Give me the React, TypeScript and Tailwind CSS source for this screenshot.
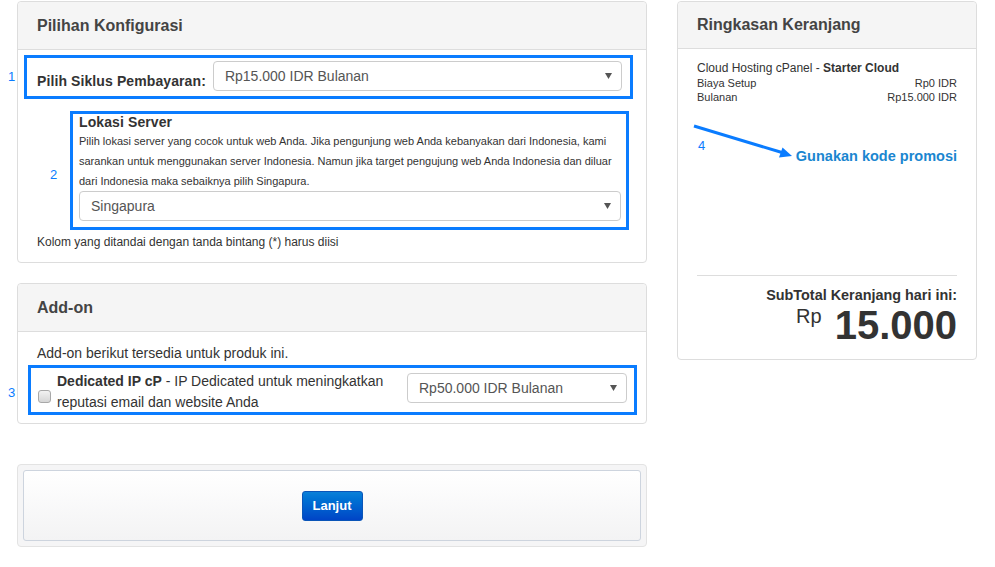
import React from 'react';

const BLUE = 'border-[#0a7cff]';

function FakeSelect({ value, className = '' }: { value: string; className?: string }) {
  return (
    <div
      className={`h-[30px] border border-[#cccccc] rounded-[4px] bg-white pl-[11px] pr-[9px] flex items-center justify-between text-[14px] text-[#555555] ${className}`}
    >
      <span>{value}</span>
      <svg width="7" height="6" viewBox="0 0 7 6">
        <polygon points="0,0 7,0 3.5,6" fill="#555555" />
      </svg>
    </div>
  );
}

function PanelHeader({ title, h = 'h-[48px]' }: { title: string; h?: string }) {
  return (
    <div className={`${h} bg-[#f5f5f5] border-b border-[#dddddd] rounded-t-[4px] px-[19px] flex items-center`}>
      <h3 className="text-[16px] font-bold text-[#444444]">{title}</h3>
    </div>
  );
}

export default function App() {
  return (
    <div
      className="relative w-[995px] h-[567px] overflow-hidden bg-white text-[#333333]"
      style={{ fontFamily: '"Liberation Sans", Arial, sans-serif' }}
    >
      <div className="flex items-start pt-px pl-[17px] gap-[30px]">
        {/* Left column */}
        <div className="w-[630px] flex flex-col">
          {/* Pilihan Konfigurasi */}
          <div className="border border-[#dddddd] rounded-[4px] bg-white">
            <PanelHeader title="Pilihan Konfigurasi" />
            <div className="pt-[5px] pb-[12px]">
              <div className={`ml-[6px] mr-[13px] border-[3px] ${BLUE} pl-[10px] pr-[8px] pt-[3px] pb-[5px] flex items-center`}>
                <label className="text-[14px] leading-[16px] font-bold text-[#333333] mt-[10px] mr-[7px] whitespace-nowrap tracking-[0.1px]">
                  Pilih Siklus Pembayaran:
                </label>
                <FakeSelect value="Rp15.000 IDR Bulanan" className="flex-1" />
              </div>

              <div className={`mt-[12px] ml-[52px] mr-[17px] border-[3px] ${BLUE} pl-[6px] pr-[5px] pb-[6px]`}>
                <div className="text-[14px] font-bold leading-[17px] text-[#333333] tracking-[0.1px]">Lokasi Server</div>
                <p className="text-[11px] leading-[20px] text-[#333333] whitespace-nowrap">
                  Pilih lokasi server yang cocok untuk web Anda. Jika pengunjung web Anda kebanyakan dari Indonesia, kami
                  <br />
                  sarankan untuk menggunakan server Indonesia. Namun jika target pengujung web Anda Indonesia dan diluar
                  <br />
                  dari Indonesia maka sebaiknya pilih Singapura.
                </p>
                <FakeSelect value="Singapura" />
              </div>

              <p className="mt-[4px] pl-[19px] text-[12px] leading-[16px] text-[#333333]">
                Kolom yang ditandai dengan tanda bintang (*) harus diisi
              </p>
            </div>
          </div>

          {/* Add-on */}
          <div className="mt-[20px] border border-[#dddddd] rounded-[4px] bg-white">
            <PanelHeader title="Add-on" />
            <div className="pt-[11px] pb-[8px]">
              <p className="pl-[19px] text-[14px] leading-[20px]">Add-on berikut tersedia untuk produk ini.</p>
              <div className={`mt-[2px] ml-[10px] mr-[9px] h-[50px] border-[3px] ${BLUE} flex items-start`}>
                <span className="ml-[7px] mt-[22px] w-[13px] h-[13px] rounded-[3px] border border-[#a8a8a8] bg-gradient-to-b from-[#f2f2f2] to-[#d6d6d6] shrink-0" />
                <div className="ml-[6px] mt-[3px] w-[340px] text-[14px] leading-[21px]">
                  <strong>Dedicated IP cP</strong> - IP Dedicated untuk meningkatkan reputasi email dan website Anda
                </div>
                <FakeSelect value="Rp50.000 IDR Bulanan" className="ml-auto mr-[7px] mt-[5px] w-[220px]" />
              </div>
            </div>
          </div>

          {/* Continue */}
          <div className="mt-[40px] border border-[#e3e3e3] rounded-[4px] bg-[#f5f5f6] p-[5px]">
            <div className="h-[71px] border border-[#cdd4de] rounded-[3px] bg-gradient-to-b from-white to-[#f3f3f4] flex items-center justify-center">
              <button
                className="w-[61px] h-[30px] rounded-[3px] border border-[#0a55b8] bg-gradient-to-b from-[#0b80d8] to-[#0044c6] text-white text-[13px] font-bold"
                style={{ fontFamily: '"Liberation Sans Narrow", "Liberation Sans", Arial, sans-serif' }}
              >
                Lanjut
              </button>
            </div>
          </div>
        </div>

        {/* Right column */}
        <div className="w-[300px] h-[359px] border border-[#dddddd] rounded-[4px] bg-white flex flex-col">
          <PanelHeader title="Ringkasan Keranjang" h="h-[47px]" />
          <div className="px-[19px] pt-[12px] flex flex-col">
            <div className="text-[12px] leading-[15px]">
              Cloud Hosting cPanel - <strong>Starter Cloud</strong>
            </div>
            <div className="flex justify-between text-[11px] leading-[14px]">
              <span>Biaya Setup</span>
              <span>Rp0 IDR</span>
            </div>
            <div className="flex justify-between text-[11px] leading-[14px]">
              <span>Bulanan</span>
              <span>Rp15.000 IDR</span>
            </div>
            <div className="mt-[44px] text-right text-[14.5px] leading-[17px] font-bold text-[#1a86d0]">
              Gunakan kode promosi
            </div>
            <div className="mt-[110px] border-t border-[#dddddd]" />
            <div className="mt-[11px] text-right text-[14.4px] leading-[17px] font-bold">
              SubTotal Keranjang hari ini:
            </div>
            <div className="mt-[1px] flex items-start justify-end">
              <span className="text-[20px] leading-[20px] mt-[1px] mr-[13px]">Rp</span>
              <span className="text-[40px] leading-[40px] font-bold">15.000</span>
            </div>
          </div>
        </div>
      </div>

      {/* Annotations */}
      <span className="absolute left-[8px] top-[70px] text-[13px] leading-[14px] text-[#0a7cff]">1</span>
      <span className="absolute left-[50px] top-[168px] text-[13px] leading-[14px] text-[#0a7cff]">2</span>
      <span className="absolute left-[8px] top-[386px] text-[13px] leading-[14px] text-[#0a7cff]">3</span>
      <span className="absolute left-[698px] top-[139px] text-[13px] leading-[14px] text-[#0a7cff]">4</span>
      <svg className="absolute left-0 top-0" width="995" height="567" viewBox="0 0 995 567" style={{ pointerEvents: 'none' }}>
        <line x1="694" y1="126" x2="782" y2="152.5" stroke="#0a7cff" strokeWidth="3" />
        <polygon points="792,156 779,157.5 782.5,147.5" fill="#0a7cff" />
      </svg>
    </div>
  );
}
